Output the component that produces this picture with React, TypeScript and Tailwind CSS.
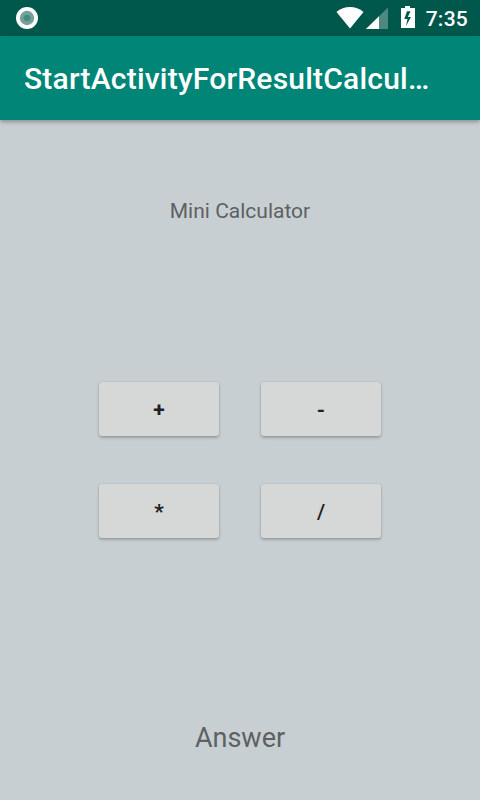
import React from "react";

function OperationButton({ label, weight = "font-bold" }: { label: string; weight?: string }) {
  return (
    <button
      className={`flex h-[54px] w-[120px] items-center justify-center rounded-[3px] bg-[#d6d7d7] pt-[2px] text-[21px] leading-none text-[#202122] shadow-[0_2px_3px_rgba(0,0,0,0.22),0_0_2px_rgba(0,0,0,0.14)] ${weight}`}
    >
      {label}
    </button>
  );
}

export default function App() {
  return (
    <div className="flex h-[800px] w-[480px] flex-col overflow-hidden bg-[#c8cfd2] font-['Roboto',sans-serif]">
      <header className="flex h-9 shrink-0 items-center bg-[#00574b] pr-3 pl-4 text-white">
        <svg width="22" height="22" viewBox="0 0 22 22">
          <circle cx="11" cy="11" r="11" fill="#fff" />
          <circle cx="11" cy="11" r="7.2" fill="#73a29b" />
          <circle cx="11" cy="11" r="3.3" fill="#4d8880" />
        </svg>
        <svg className="ml-auto" width="84" height="36" viewBox="0 0 84 36" fill="#fff">
          <path d="M1.5 12C9 5.4 21 5.4 28.5 12L15 28.5Z" />
          <path d="M53 7.5V29H31Z" opacity=".3" />
          <path d="M44 16.3V29H31Z" />
          <path fillRule="evenodd" d="M70 6h5v2h5v20h-14V8h4zM72 11.2L69.3 19h3.2L71 26l5-9h-3.2L75.5 11.2z" />
        </svg>
        <span className="ml-[7px] pt-[2px] text-[21px] font-medium leading-[34px] tracking-[0.25px]">7:35</span>
      </header>
      <div className="z-10 flex h-[84px] shrink-0 items-center bg-[#008577] pt-[2px] pl-6 shadow-[0_2px_4px_rgba(0,0,0,0.3)]">
        <h1 className="text-[30px] font-medium leading-9 tracking-[0.21px] text-white">StartActivityForResultCalcul…</h1>
      </div>
      <main className="flex flex-1 flex-col items-center">
        <p className="mt-[77px] text-[21px] leading-7 text-[#5d6163]">Mini Calculator</p>
        <div className="mt-[157px] grid grid-cols-2 gap-x-[42px] gap-y-12">
          <OperationButton label="+" />
          <OperationButton label="-" />
          <OperationButton label="*" />
          <OperationButton label="/" weight="font-medium" />
        </div>
        <p className="mt-[182px] text-[27px] leading-9 text-[#5d6163]">Answer</p>
      </main>
    </div>
  );
}
